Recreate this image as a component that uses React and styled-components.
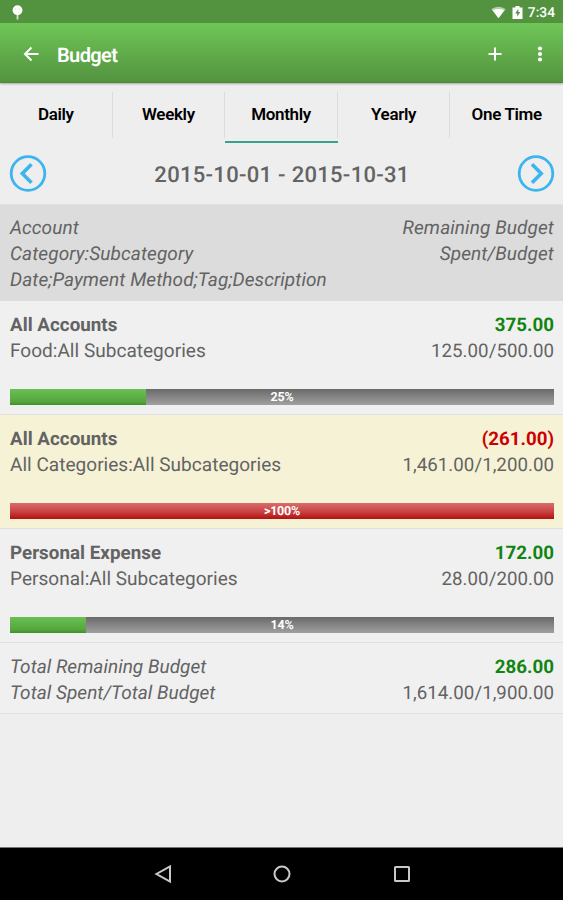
import React, { useState } from "react";
import styled, { createGlobalStyle } from "styled-components";

const GlobalStyle = createGlobalStyle`
    * {
        box-sizing: border-box;
    }

    body {
        margin: 0;
        background-color: #eeeeee;
        font-family: Roboto, "Liberation Sans", sans-serif;
        text-rendering: geometricPrecision;
    }
`;

const Screen = styled.div`
    display: flex;
    flex-direction: column;
    height: 100vh;
    min-height: 900px;
    background-color: #eeeeee;
    color: #636363;
`;

const StatusBar = styled.div`
    display: flex;
    align-items: center;
    flex: 0 0 23px;
    padding: 2px 8px 0 12px;
    background-color: #53933f;
    color: white;
`;

const StatusIcons = styled.div`
    display: flex;
    align-items: center;
    gap: 6px;
    margin-left: auto;
`;

const Clock = styled.span`
    font-size: 13.8px;
    line-height: 20px;
    font-weight: 500;
    margin-left: -1px;
`;

const AppBar = styled.header`
    display: flex;
    align-items: center;
    flex: 0 0 60px;
    padding: 2px 17px 0 22px;
    background: linear-gradient(#6fc657, #53933f);
    border-bottom: 1px solid #4d883b;
    box-shadow: 0 1px 2px rgba(0, 0, 0, 0.3);
    color: white;
`;

const AppTitle = styled.h1`
    flex: 1;
    margin: 2px 0 0 17px;
    font-size: 20px;
    line-height: 26px;
    font-weight: 600;
    letter-spacing: -0.6px;
`;

const IconButton = styled.button`
    display: flex;
    padding: 0;
    border: none;
    background: none;
    color: inherit;
    cursor: pointer;

    & + & {
        margin-left: 32px;
    }
`;

const Tabs = styled.nav`
    display: grid;
    grid-template-columns: repeat(5, 1fr);
    flex: 0 0 60px;
`;

const Tab = styled.button`
    display: flex;
    padding: 9px 0 3px;
    border: none;
    border-bottom: 2px solid ${(props) => (props.$active ? "#36a38c" : "transparent")};
    background: none;
    color: black;
    font-family: inherit;
    font-size: 17px;
    font-weight: 600;
    letter-spacing: -0.35px;
    cursor: pointer;
`;

const TabLabel = styled.span`
    flex: 1;
    align-self: stretch;
    line-height: 45px;
    border-right: 1px solid #dcdcdc;

    ${Tab}:last-child & {
        border-right: none;
    }
`;

const PeriodBar = styled.div`
    display: flex;
    align-items: center;
    justify-content: space-between;
    flex: 0 0 62px;
    padding: 0 8px 1px 9px;
    border-bottom: 1px solid #e2e2e2;
`;

const Period = styled.span`
    padding-top: 4px;
    font-size: 22px;
    font-weight: 500;
    letter-spacing: 0.3px;
`;

const Line = styled.div`
    display: flex;
    justify-content: space-between;
    font-size: 19px;
    line-height: 26px;
    letter-spacing: 0.03px;
`;

const Legend = styled.div`
    flex: 0 0 96px;
    padding: 10px 9px 8px 10px;
    background-color: #dcdcdc;
    font-style: italic;

    ${Line} {
        letter-spacing: 0.1px;
    }
`;

const Row = styled.section`
    padding: 11px 9px ${(props) => (props.$total ? 7 : 9)}px 10px;
    background-color: ${(props) => (props.$over ? "#f6f2d6" : "#f0f0f0")};
    border-bottom: 1px solid #dfdfdf;
    font-style: ${(props) => (props.$total ? "italic" : "normal")};
`;

const Name = styled.span`
    font-size: 18.8px;
    font-weight: 700;
`;

const Remaining = styled.span`
    font-size: 18.7px;
    font-style: normal;
    font-weight: 700;
    color: ${(props) => (props.$negative ? "#cc0000" : "#118411")};
`;

const Spent = styled.span`
    font-size: 18.7px;
    font-style: normal;
`;

const Meter = styled.div`
    display: grid;
    grid-template-rows: 16px;
    margin-top: 25px;
    background: linear-gradient(#6a6a6a, #a0a0a0);

    & > * {
        grid-area: 1 / 1;
    }
`;

const MeterFill = styled.div`
    background: ${(props) =>
        props.$over
            ? "linear-gradient(#d96c6c, #cb4646 50%, #b41010)"
            : "linear-gradient(#6ac052, #55a53e 80%, #429022)"};
`;

const MeterLabel = styled.span`
    color: white;
    font-size: 12.5px;
    line-height: 17px;
    font-weight: 700;
    letter-spacing: -0.2px;
    text-align: center;
`;

const NavBar = styled.footer`
    display: flex;
    align-items: center;
    justify-content: center;
    gap: 100px;
    flex: 0 0 53px;
    margin-top: auto;
    border-top: 1px solid #777777;
    background-color: black;
    color: #c8c8c8;
`;

const periods = ["Daily", "Weekly", "Monthly", "Yearly", "One Time"];

const budgets = [
    { id: 1, account: "All Accounts", category: "Food:All Subcategories", remaining: "375.00", spent: "125.00/500.00", percent: 25, label: "25%" },
    { id: 2, account: "All Accounts", category: "All Categories:All Subcategories", remaining: "(261.00)", spent: "1,461.00/1,200.00", percent: 100, label: ">100%", over: true },
    { id: 3, account: "Personal Expense", category: "Personal:All Subcategories", remaining: "172.00", spent: "28.00/200.00", percent: 14, label: "14%" },
];

const Arrow = ({ next }) => (
    <svg width="38" height="38" viewBox="0 0 38 38" fill="none" stroke="#3bb4f0">
        <circle cx="19" cy="19.5" r="16.8" strokeWidth="2.8" />
        <path d={next ? "M15 10.3 24.2 19.5 15 28.7" : "M22.5 10.3 13.3 19.5 22.5 28.7"} strokeWidth="3.6" />
    </svg>
);

const App = () => {
    const [active, setActive] = useState("Monthly");

    return (
        <Screen>
            <GlobalStyle />
            <StatusBar>
                <svg width="11" height="15" viewBox="0 0 11 15" fill="currentColor">
                    <circle cx="5.5" cy="5.2" r="4.9" />
                    <path d="M4.6 9h1.8v5.5H4.6z" opacity="0.75" />
                    <circle cx="3.8" cy="4" r="0.5" fill="#8dba80" />
                    <circle cx="7.2" cy="4" r="0.5" fill="#8dba80" />
                </svg>
                <StatusIcons>
                    <svg width="15" height="13" viewBox="0 0 15 13" fill="currentColor">
                        <path d="M0.3 3.2C4.5-.2 10.5-.2 14.7 3.2L7.5 12.3z" opacity="0.55" />
                        <path d="M1.8 4.2Q7.5 1.8 13.2 4.2L7.5 12.3z" />
                    </svg>
                    <svg width="11" height="13" viewBox="0 0 11 13">
                        <path d="M3.5 0h4v1.4h3V13H.5V1.4h3z" fill="currentColor" />
                        <path d="M6.3 2.8 3.2 7.5h2v3.2l3-4.7H6.3z" fill="#53933f" />
                    </svg>
                    <Clock>7:34</Clock>
                </StatusIcons>
            </StatusBar>
            <AppBar>
                <IconButton aria-label="Back">
                    <svg width="18" height="18" viewBox="0 0 18 18" fill="none" stroke="currentColor" strokeWidth="2">
                        <path d="M16.5 9H3M9.5 2.5 3 9l6.5 6.5" />
                    </svg>
                </IconButton>
                <AppTitle>Budget</AppTitle>
                <IconButton aria-label="Add">
                    <svg width="14" height="14" viewBox="0 0 14 14" stroke="currentColor" strokeWidth="2">
                        <path d="M7 0.5v13M0.5 7h13" />
                    </svg>
                </IconButton>
                <IconButton aria-label="More">
                    <svg width="12" height="18" viewBox="0 0 12 18" fill="currentColor">
                        <circle cx="6" cy="3.5" r="2.1" />
                        <circle cx="6" cy="9" r="2.1" />
                        <circle cx="6" cy="14.5" r="2.1" />
                    </svg>
                </IconButton>
            </AppBar>
            <Tabs>
                {periods.map((period) => (
                    <Tab key={period} $active={period === active} onClick={() => setActive(period)}>
                        <TabLabel>{period}</TabLabel>
                    </Tab>
                ))}
            </Tabs>
            <PeriodBar>
                <IconButton aria-label="Previous period">
                    <Arrow />
                </IconButton>
                <Period>2015-10-01 - 2015-10-31</Period>
                <IconButton aria-label="Next period">
                    <Arrow next />
                </IconButton>
            </PeriodBar>
            <Legend>
                <Line>
                    <span>Account</span>
                    <span>Remaining Budget</span>
                </Line>
                <Line>
                    <span>Category:Subcategory</span>
                    <span>Spent/Budget</span>
                </Line>
                <Line>
                    <span>Date;Payment Method;Tag;Description</span>
                </Line>
            </Legend>
            {budgets.map((budget) => (
                <Row key={budget.id} $over={budget.over}>
                    <Line>
                        <Name>{budget.account}</Name>
                        <Remaining $negative={budget.over}>{budget.remaining}</Remaining>
                    </Line>
                    <Line>
                        <span>{budget.category}</span>
                        <Spent>{budget.spent}</Spent>
                    </Line>
                    <Meter>
                        <MeterFill $over={budget.over} style={{ width: `${budget.percent}%` }} />
                        <MeterLabel>{budget.label}</MeterLabel>
                    </Meter>
                </Row>
            ))}
            <Row $total>
                <Line>
                    <span>Total Remaining Budget</span>
                    <Remaining>286.00</Remaining>
                </Line>
                <Line>
                    <span>Total Spent/Total Budget</span>
                    <Spent>1,614.00/1,900.00</Spent>
                </Line>
            </Row>
            <NavBar>
                <svg width="20" height="20" viewBox="0 0 20 20" fill="none" stroke="currentColor" strokeWidth="2">
                    <path d="M18 2.5v15L4.5 10z" />
                </svg>
                <svg width="20" height="20" viewBox="0 0 20 20" fill="none" stroke="currentColor" strokeWidth="2">
                    <circle cx="10" cy="10" r="7.5" />
                </svg>
                <svg width="20" height="20" viewBox="0 0 20 20" fill="none" stroke="currentColor" strokeWidth="2">
                    <rect x="3" y="3" width="14" height="14" rx="0.5" />
                </svg>
            </NavBar>
        </Screen>
    );
};

export default App;
